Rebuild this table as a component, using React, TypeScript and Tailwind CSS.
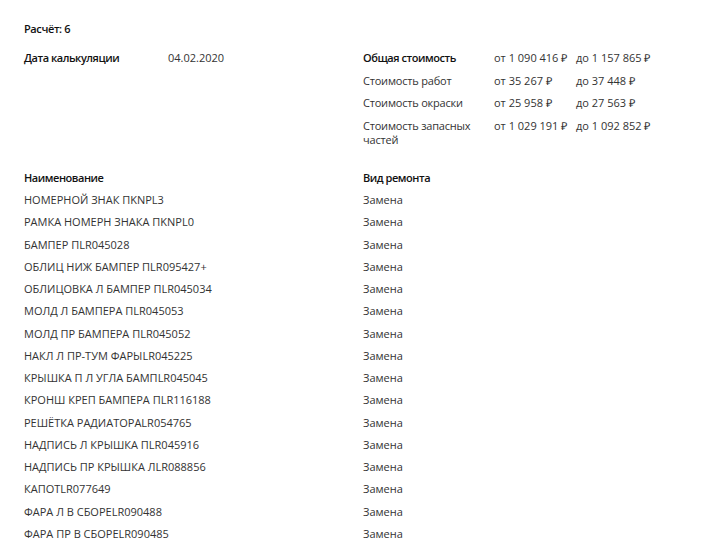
const totals = [
  { label: "Общая стоимость", from: "от 1 090 416 ₽", to: "до 1 157 865 ₽", bold: true },
  { label: "Стоимость работ", from: "от 35 267 ₽", to: "до 37 448 ₽" },
  { label: "Стоимость окраски", from: "от 25 958 ₽", to: "до 27 563 ₽" },
  { label: "Стоимость запасных частей", from: "от 1 029 191 ₽", to: "до 1 092 852 ₽" },
];

const parts = [
  "НОМЕРНОЙ ЗНАК ПKNPL3",
  "РАМКА НОМЕРН ЗНАКА ПKNPL0",
  "БАМПЕР ПLR045028",
  "ОБЛИЦ НИЖ БАМПЕР ПLR095427+",
  "ОБЛИЦОВКА Л БАМПЕР ПLR045034",
  "МОЛД Л БАМПЕРА ПLR045053",
  "МОЛД ПР БАМПЕРА ПLR045052",
  "НАКЛ Л ПР-ТУМ ФАРЫLR045225",
  "КРЫШКА П Л УГЛА БАМПLR045045",
  "КРОНШ КРЕП БАМПЕРА ПLR116188",
  "РЕШЁТКА РАДИАТОРАLR054765",
  "НАДПИСЬ Л КРЫШКА ПLR045916",
  "НАДПИСЬ ПР КРЫШКА ЛLR088856",
  "КАПОТLR077649",
  "ФАРА Л В СБОРЕLR090488",
  "ФАРА ПР В СБОРЕLR090485",
];

export default function App() {
  return (
    <div className="min-h-[558px] bg-white px-[24px] pt-[22px] text-[11px] text-[#333] font-['Open_Sans',sans-serif]">
      <div className="leading-[14px] font-semibold tracking-[-0.4px] text-[#111]">Расчёт: 6</div>

      <div className="mt-[10.75px] flex">
        <div className="flex w-[339px] items-start py-[4.25px] leading-[14px]">
          <span className="w-[144px] font-semibold tracking-[-0.45px] text-[#111]">Дата калькуляции</span>
          <span>04.02.2020</span>
        </div>
        <div className="grid grid-cols-[131px_82px_auto] leading-[14px]">
          {totals.map((t) => (
            <div key={t.label} className="contents">
              <div className={`py-[4.25px] pr-[10px] ${t.bold ? "font-semibold tracking-[-0.45px] text-[#111]" : "tracking-[-0.2px]"}`}>{t.label}</div>
              <div className="py-[4.25px] whitespace-nowrap">{t.from}</div>
              <div className="py-[4.25px] whitespace-nowrap">{t.to}</div>
            </div>
          ))}
        </div>
      </div>

      <div className="mt-[16px]">
        <div className="flex h-[22.27px] leading-[22.27px] font-semibold tracking-[-0.45px] text-[#111]">
          <span className="w-[339px]">Наименование</span>
          <span>Вид ремонта</span>
        </div>
        {parts.map((p) => (
          <div key={p} className="flex h-[22.27px] leading-[22.27px]">
            <span className="w-[339px]">{p}</span>
            <span>Замена</span>
          </div>
        ))}
      </div>
    </div>
  );
}
